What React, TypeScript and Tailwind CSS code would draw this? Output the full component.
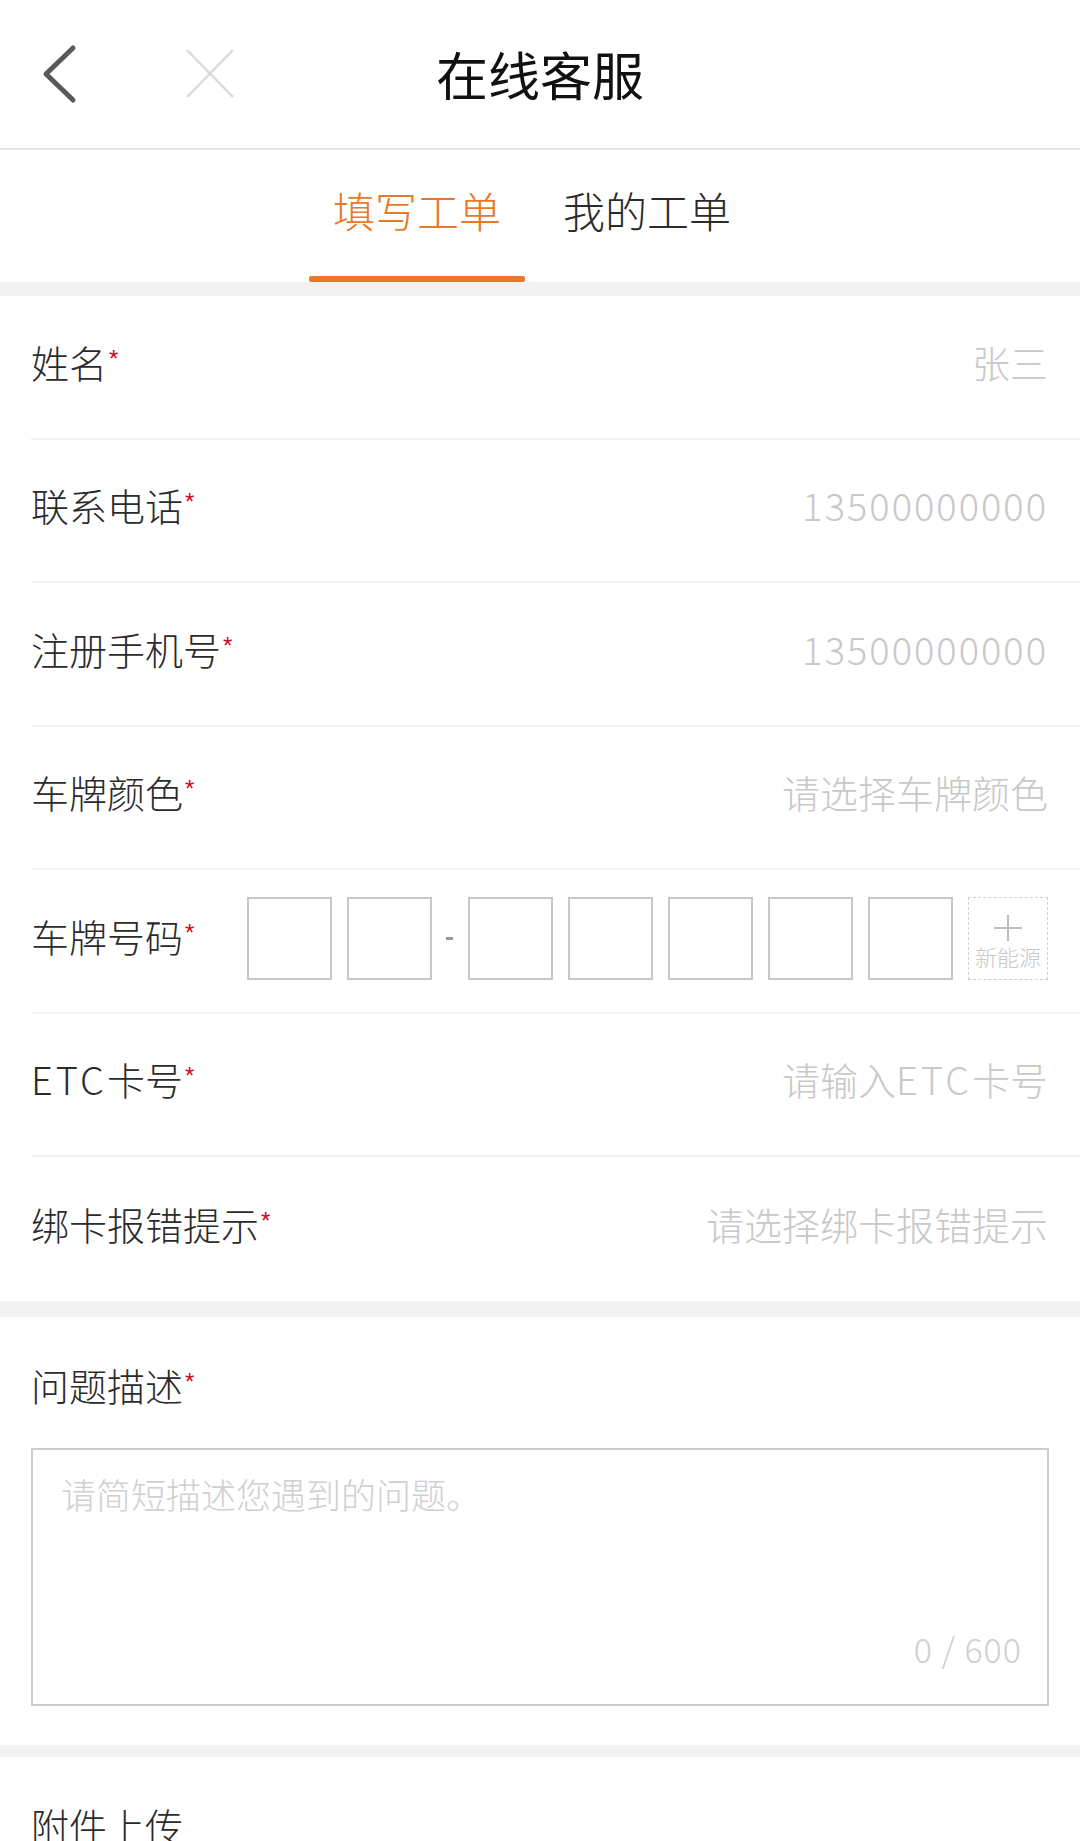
import React from "react"

// Form rows shown under the "填写工单" tab
interface FieldRow {
  label: React.ReactNode
  value?: React.ReactNode
  plate?: boolean
}

// Latin runs in the reference font sit a little wider than in Noto
const Etc = () => <span className="tracking-[3px]">ETC</span>
const Digits = ({ children }: { children: string }) => <span className="tracking-[2px]">{children}</span>

const rows: FieldRow[] = [
  { label: "姓名", value: "张三" },
  { label: "联系电话", value: <Digits>13500000000</Digits> },
  { label: "注册手机号", value: <Digits>13500000000</Digits> },
  { label: "车牌颜色", value: "请选择车牌颜色" },
  { label: "车牌号码", plate: true },
  {
    label: (
      <>
        <Etc />
        卡号
      </>
    ),
    value: (
      <>
        请输入
        <Etc />
        卡号
      </>
    ),
  },
  { label: "绑卡报错提示", value: "请选择绑卡报错提示" },
]

function Required() {
  return (
    <span className="relative -top-[11px] ml-[2px] text-[24px] font-normal font-['Liberation_Sans',sans-serif] text-[#d0021b]">
      *
    </span>
  )
}

function Label({ text, required = true }: { text: React.ReactNode; required?: boolean }) {
  return (
    <div className="text-[38px] leading-[1.4] font-light text-[#2b2b2b]">
      {text}
      {required && <Required />}
    </div>
  )
}

function PlateBox() {
  return <div className="w-[85px] h-[83px] border-2 border-[#c8c8c8] bg-white" />
}

function PlateInput() {
  return (
    <div className="ml-auto flex items-center">
      <PlateBox />
      <div className="ml-[15px]">
        <PlateBox />
      </div>
      <div className="ml-[14px] mr-[15px] w-[7px] h-[3px] bg-[#999]" />
      <div className="flex gap-[15px]">
        <PlateBox />
        <PlateBox />
        <PlateBox />
        <PlateBox />
        <PlateBox />
      </div>
      <div className="ml-[15px] w-[80px] h-[83px] border-[1.5px] border-dashed border-[#cfcfcf] flex flex-col items-center pt-[17px]">
        <svg width="30" height="26" viewBox="0 0 30 26">
          <path d="M1 13 H29 M15 0 V26" stroke="#bdbdbd" strokeWidth="2" fill="none" />
        </svg>
        <span className="mt-[4px] text-[22px] leading-none font-light text-[#c8c8c8]">新能源</span>
      </div>
    </div>
  )
}

export default function App() {
  return (
    <div className="w-[1080px] h-[1841px] overflow-hidden bg-white font-['Noto_Sans_CJK_SC','Liberation_Sans',sans-serif]">
      {/* Navigation bar */}
      <header className="h-[150px] grid grid-cols-[1fr_auto_1fr] items-center border-b-2 border-[#e6e6e6] pt-[1px]">
        <div className="flex items-center -mt-[1px]">
          <svg className="ml-[40px]" width="40" height="64" viewBox="0 0 40 64">
            <path
              d="M33 6 L6 32 L33 58"
              stroke="#595959"
              strokeWidth="5"
              strokeLinecap="round"
              strokeLinejoin="round"
              fill="none"
            />
          </svg>
          <svg className="ml-[105px]" width="50" height="50" viewBox="0 0 50 50">
            <path d="M2 1 L48 48 M48 1 L2 48" stroke="#dadada" strokeWidth="2.5" fill="none" />
          </svg>
        </div>
        <h1 className="text-[52px] leading-[1.4] text-[#111]">在线客服</h1>
        <div />
      </header>

      {/* Tabs */}
      <div className="h-[132px] flex justify-center pr-[16px]">
        <div className="w-[230px] flex flex-col items-center pt-[31px]">
          <span className="text-[42px] leading-[1.4] font-light text-[#e8782a]">填写工单</span>
          <div className="mt-auto w-[216px] h-[6px] rounded-[2px] bg-[#e8782a]" />
        </div>
        <div className="w-[230px] flex flex-col items-center pt-[31px]">
          <span className="text-[42px] leading-[1.4] font-light text-[#2b2b2b]">我的工单</span>
        </div>
      </div>
      <div className="h-[14px] bg-[#f2f2f2]" />

      {/* Form rows */}
      <div>
        {rows.map((row, i) => (
          <div key={i} className="pl-[31px]">
            <div
              className={
                i < rows.length - 1
                  ? "h-[143.5px] flex items-center pr-[32px] pb-[11px] border-b-2 border-[#f2f2f2]"
                  : "h-[143.5px] flex items-center pr-[32px] pb-[11px]"
              }
            >
              <Label text={row.label} />
              {row.plate ? (
                <div className="ml-auto -mb-[7px]">
                  <PlateInput />
                </div>
              ) : (
                <div className="ml-auto text-[38px] leading-[1.4] font-light text-[#c8c8c8]">{row.value}</div>
              )}
            </div>
          </div>
        ))}
      </div>
      <div className="h-[16px] bg-[#f2f2f2]" />

      {/* Problem description */}
      <section className="px-[31px] pt-[41px] pb-[39px]">
        <Label text="问题描述" />
        <div className="mt-[37px] h-[258px] border-2 border-[#cccccc] flex flex-col pt-[19px] pl-[28px] pr-[25px] pb-[31px]">
          <span className="text-[35px] leading-[1.4] font-light text-[#d0d0d0]">请简短描述您遇到的问题。</span>
          <span className="mt-auto self-end text-[34px] leading-[1.4] font-light tracking-[1px] text-[#cfcfcf]">0 / 600</span>
        </div>
      </section>
      <div className="h-[12px] bg-[#f2f2f2]" />

      {/* Attachment upload */}
      <section className="px-[31px] pt-[41px]">
        <Label text="附件上传" required={false} />
      </section>
    </div>
  )
}
